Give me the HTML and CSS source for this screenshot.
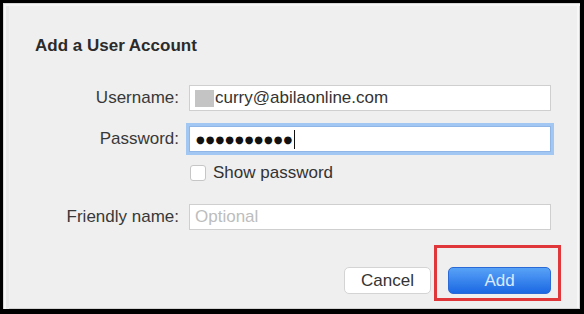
FILE: index.html
```html
<!DOCTYPE html>
<html lang="en">

<head>
  <meta charset="UTF-8">
  <meta name="viewport" content="width=device-width, initial-scale=1.0">
  <title>Add a User Account</title>

  <!-- styles -->
  <link rel="stylesheet" href="styles.css">
</head>

<body>
  <div class="window">
    <h2 class="title">Add a User Account</h2>

    <div class="form">
      <div class="row row-username">
        <span class="label">Username:</span>
        <div class="field"><span class="redact"></span>curry@abilaonline.com</div>
      </div>
      <div class="row row-password">
        <span class="label">Password:</span>
        <div class="field focused"><span class="dots">●●●●●●●●●●</span><span class="caret"></span></div>
      </div>
      <div class="row row-check">
        <span></span>
        <label class="check"><span class="box"></span>Show password</label>
      </div>
      <div class="row row-friendly">
        <span class="label">Friendly name:</span>
        <div class="field"><span class="placeholder">Optional</span></div>
      </div>
    </div>

    <div class="actions">
      <button class="btn cancel">Cancel</button>
      <button class="btn add">Add</button>
    </div>

    <!-- annotation box -->
    <div class="highlight"></div>
  </div>
</body>

</html>
```

FILE: styles.css
```css
* {
  margin: 0;
  padding: 0;
  box-sizing: border-box;
  font-family: "Liberation Sans", Arial, sans-serif;
}

body {
  background-color: #000;
  padding: 3px 4px 5px 3px;
  width: 584px;
  height: 314px;
  overflow: hidden;
}

.window {
  position: relative;
  width: 577px;
  height: 306px;
  padding-top: 33px;
  background-color: #efefef;
  box-shadow: inset 1px 1px 0 #d6d6d6, inset 3px 3px 0 #f6f6f6, inset 6px 0 0 #e8e8e8, inset -1px -1px 0 #d2d2d2, inset -3px 0 0 #f7f7f7;
  color: #333;
}

.title {
  padding-left: 32px;
  font-size: 17px;
  line-height: 20px;
  font-weight: 700;
  color: #2b2b2b;
}

.form {
  display: flex;
  flex-direction: column;
  padding-right: 29px;
  margin-top: 29px;
}

.row {
  display: grid;
  grid-template-columns: 176px 1fr;
  column-gap: 10px;
  align-items: center;
}

.row-password {
  margin-top: 15px;
}

.row-check {
  margin-top: 11px;
}

.row-friendly {
  margin-top: 21px;
}

.label {
  text-align: right;
  font-size: 17px;
  color: #383838;
}

.field {
  display: flex;
  align-items: center;
  height: 26px;
  padding-left: 5px;
  background-color: #fff;
  border: 1px solid #cfcfcf;
  font-size: 17px;
  color: #333;
}

.field.focused {
  border-color: #8fb6e6;
  box-shadow: 0 0 0 3px #a2c7f2;
  padding-left: 6px;
}

.redact {
  width: 19px;
  height: 17px;
  margin-right: 1px;
  background-color: #c4c4c4;
}

.dots {
  font-family: "DejaVu Sans", sans-serif;
  font-size: 10px;
  letter-spacing: 1px;
  color: #111;
}

.caret {
  width: 1px;
  height: 19px;
  margin-left: 1px;
  background-color: #111;
}

.placeholder {
  color: #bdbdbd;
}

.check {
  display: flex;
  align-items: center;
  gap: 7px;
  margin-left: 1px;
  font-size: 17px;
  color: #333;
}

.check .box {
  width: 16px;
  height: 16px;
  border: 1px solid #c6c6c6;
  border-radius: 3px;
  background-color: #fff;
}

.actions {
  display: flex;
  justify-content: flex-end;
  gap: 17px;
  padding-right: 29px;
  margin-top: 37px;
}

.btn {
  height: 27px;
  border-radius: 5px;
  font-size: 17px;
}

.cancel {
  width: 87px;
  background-color: #fff;
  border: 1px solid #d4d4d4;
  color: #333;
}

.add {
  width: 103px;
  border: 1px solid #2a6ad6;
  background: linear-gradient(#58a2f7, #1b68e3);
  color: #dce9fd;
}

.highlight {
  position: absolute;
  left: 431px;
  top: 242px;
  width: 127px;
  height: 56px;
  border: 3px solid #e0373a;
}
```
